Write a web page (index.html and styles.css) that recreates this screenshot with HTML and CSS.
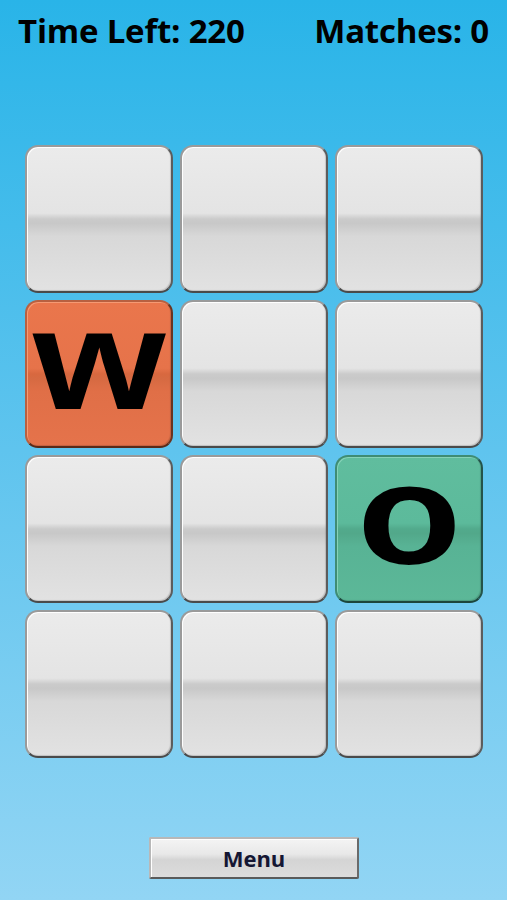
FILE: index.html
```html
<!DOCTYPE html>
<html>
<head>
<meta charset="utf-8">
<link rel="stylesheet" href="styles.css">
</head>
<body>
<div class="screen">
  <header class="hud">
    <span class="stat">Time Left: 220</span>
    <span class="stat">Matches: 0</span>
  </header>
  <main class="board">
    <div class="tile"></div>
    <div class="tile"></div>
    <div class="tile"></div>
    <div class="tile orange"><span class="glyph">w</span></div>
    <div class="tile"></div>
    <div class="tile"></div>
    <div class="tile"></div>
    <div class="tile"></div>
    <div class="tile green"><span class="glyph">o</span></div>
    <div class="tile"></div>
    <div class="tile"></div>
    <div class="tile"></div>
  </main>
  <footer class="foot">
    <button class="menu">Menu</button>
  </footer>
</div>
</body>
</html>
```
FILE: styles.css
```css
html, body {
  margin: 0;
  padding: 0;
}
body {
  width: 507px;
  height: 900px;
  background: linear-gradient(to bottom, #29b4e8 0%, #5fc4ee 50%, #92d5f4 100%);
  font-family: "Open Sans", "DejaVu Sans", sans-serif;
  overflow: hidden;
}
.screen {
  display: flex;
  flex-direction: column;
  height: 900px;
}
.hud {
  display: flex;
  justify-content: space-between;
  padding: 6px 18px 0 18px;
  height: 50px;
  box-sizing: border-box;
}
.stat {
  font-weight: 700;
  font-size: 33px;
  line-height: 50px;
  color: #000;
  letter-spacing: -0.2px;
}
.board {
  display: grid;
  grid-template-columns: repeat(3, 148px);
  grid-auto-rows: 148px;
  gap: 7px;
  margin: 95px 0 0 25px;
}
.tile {
  box-sizing: border-box;
  border-radius: 13px;
  border: 2px solid;
  border-color: #9a9a9a #5c5c5c #4a4a4a #9a9a9a;
  box-shadow: inset 1px 1px 0 #ffffff, inset -1px -1px 1px rgba(0,0,0,0.15);
  background: linear-gradient(to bottom,
    #ebebeb 0%, #e4e4e4 46%, #cbcbcb 50%, #c8c8c8 53%, #d8d8d8 62%, #e2e2e2 100%);
  display: flex;
  align-items: center;
  justify-content: center;
}
.tile.orange {
  border-color: #b86040 #6a3420 #5a2a18 #b86040;
  box-shadow: inset 1px 1px 0 #f59a74, inset -1px -1px 1px rgba(0,0,0,0.15);
  background: linear-gradient(to bottom,
    #ea764c 0%, #e6734a 46%, #d8683f 50%, #d66a42 53%, #e06f47 62%, #e5734b 100%);
}
.tile.green {
  border-color: #3f8c74 #24544a #1c463c #3f8c74;
  box-shadow: inset 1px 1px 0 #86d3b8, inset -1px -1px 1px rgba(0,0,0,0.15);
  background: linear-gradient(to bottom,
    #60bd9e 0%, #5cba9b 46%, #52aa8c 50%, #52a88a 53%, #58b395 62%, #5cb898 100%);
}
.glyph {
  font-family: "Liberation Sans", Arial, sans-serif;
  font-weight: 700;
  font-size: 142px;
  line-height: 100px;
  height: 100px;
  color: #000;
  transform: scaleX(1.2) translateY(-14px);
}
.foot {
  margin-top: auto;
  display: flex;
  justify-content: center;
  padding-bottom: 21px;
}
.menu {
  width: 210px;
  height: 42px;
  box-sizing: border-box;
  border: 2px solid;
  border-color: #b8b8b8 #6a6a6a #5a5a5a #b8b8b8;
  border-radius: 2px;
  background: linear-gradient(to bottom, #f4f4f4 0%, #e8e8e8 40%, #d4d4d4 55%, #dcdcdc 100%);
  box-shadow: inset 1px 1px 0 #fff;
  font-family: "Open Sans", "DejaVu Sans", sans-serif;
  font-weight: 700;
  font-size: 22px;
  line-height: 36px;
  color: #141633;
  padding: 0;
  margin-left: 1px;
}
```
